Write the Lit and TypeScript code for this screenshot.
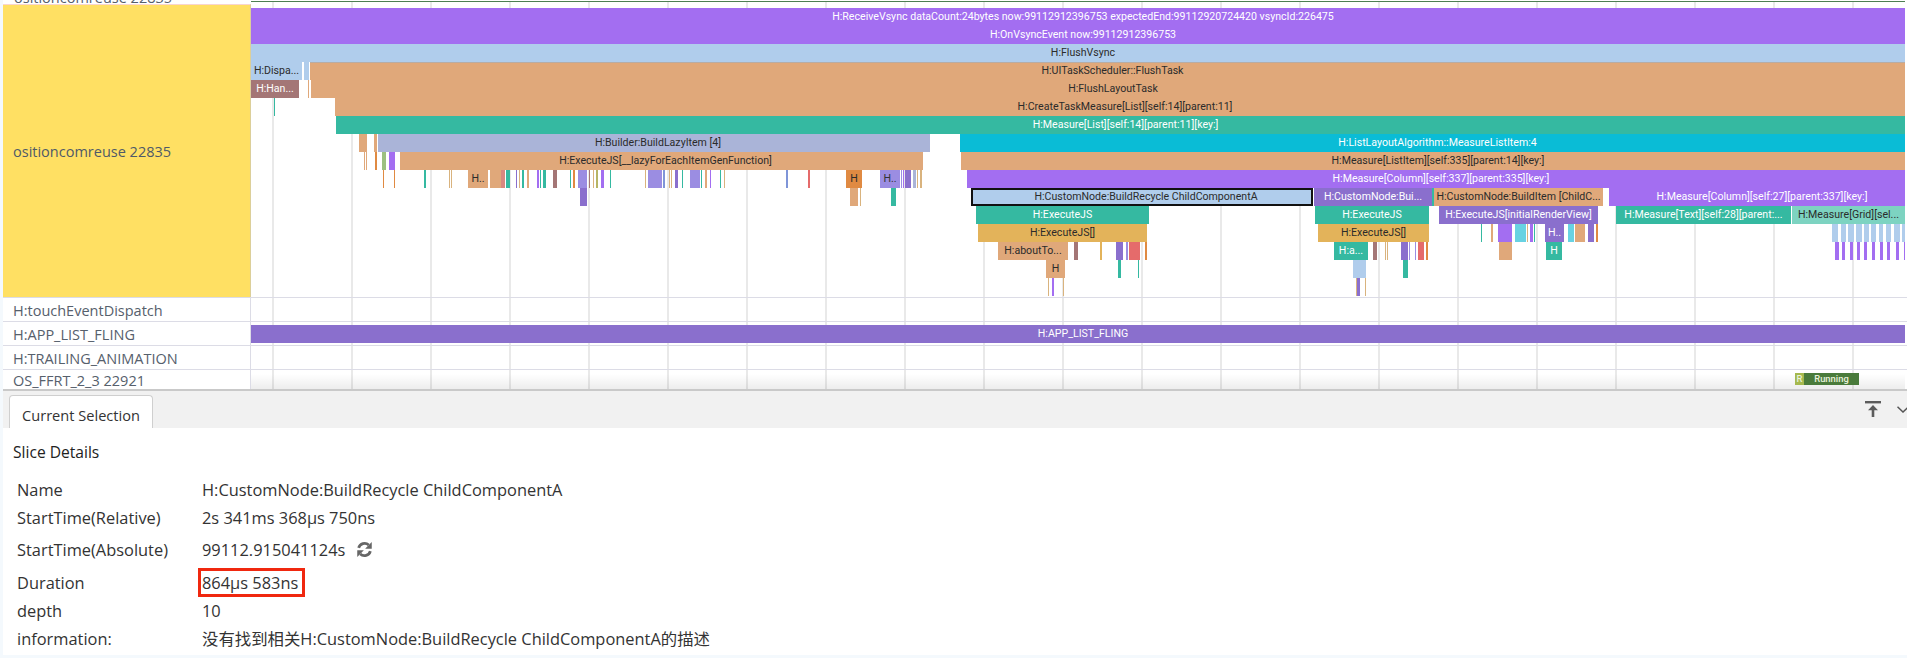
import { LitElement, html, css, svg } from "lit";
import { customElement } from "lit/decorators.js";

type B = [number, number, string, string?];
const END = 1915;
const DEPTHS: B[][] = [
  [[251, END, "pu", "H:ReceiveVsync dataCount:24bytes now:99112912396753 expectedEnd:99112920724420 vsyncId:226475"]],
  [[251, END, "pu", "H:OnVsyncEvent now:99112912396753"]],
  [[251, END, "bl", "H:FlushVsync"]],
  [[251, 302, "bl", "H:Dispa..."], [304, 309, "bl"], [310, END, "or line", "H:UITaskScheduler::FlushTask"]],
  [[251, 299, "br", "H:Han..."], [308, 309, "or"], [311, END, "or", "H:FlushLayoutTask"]],
  [[274, 275, "te"], [335, END, "or", "H:CreateTaskMeasure[List][self:14][parent:11]"]],
  [[336, END, "te", "H:Measure[List][self:14][parent:11][key:]"]],
  [[359, 367, "or"], [374, 377, "or"], [378, 930, "bg nudge", "H:Builder:BuildLazyItem [4]"], [960, END, "cy", "H:ListLayoutAlgorithm::MeasureListItem:4"]],
  [[364, 365, "or"], [366, 367, "or"], [375, 377, "do"], [382, 386, "gr"], [389, 395, "pu"], [400, 923, "or nudge", "H:ExecuteJS[__lazyForEachItemGenFunction]"], [961, END, "or", "H:Measure[ListItem][self:335][parent:14][key:]"]],
  [[383, 384, "do"], [394, 395, "do"], [424, 426, "te"], [449, 450, "ta"], [451, 452, "ta"], [468, 488, "or", "H.."], [490, 501, "or"], [501, 504.5, "pk"], [506, 510, "te"], [516, 517, "dp"], [519, 520, "ta"], [522, 523.5, "te"], [527, 529, "or"], [537, 538.5, "pu"], [540, 541, "te"], [543, 546, "te"], [553, 557, "br"], [570, 571, "te"], [573, 574.5, "do"], [578, 587, "lv"], [589, 590, "br"], [593, 594, "ta"], [596, 598, "ol"], [601, 603.5, "pu"], [610, 611, "te"], [645, 646, "ta"], [648, 662, "lv"], [663, 665, "bu"], [669, 670, "ta"], [671, 672, "ta"], [675, 678, "dp"], [682, 683, "te"], [690, 700, "lv"], [701, 702, "te"], [705, 706.5, "or"], [710, 711, "pu"], [720, 721, "te"], [724, 725, "ta"], [786, 788, "bu"], [808, 809.5, "rd"], [846, 862, "do", "H"], [880, 900, "lv", "H.."], [901, 902, "lv"], [903, 904, "pu"], [905, 911, "dp"], [913, 916, "bg"], [917, 918, "ta"], [920, 922, "ta"], [967, END, "pu", "H:Measure[Column][self:337][parent:335][key:]"]],
  [[580, 587, "dp"], [850, 858, "or"], [860, 861, "ta"], [891, 896, "te"], [971, 1313, "bl sel nudge", "H:CustomNode:BuildRecycle ChildComponentA"], [1314, 1432, "dp", "H:CustomNode:Bui..."], [1432, 1434, "te"], [1434, 1603, "or", "H:CustomNode:BuildItem [ChildC..."], [1609, END, "pu", "H:Measure[Column][self:27][parent:337][key:]"]],
  [[976, 1149, "te", "H:ExecuteJS"], [1315, 1429, "te", "H:ExecuteJS"], [1439, 1598, "dp", "H:ExecuteJS[initialRenderView]"], [1616, 1791, "te", "H:Measure[Text][self:28][parent:..."], [1792, 1905, "lt", "H:Measure[Grid][sel..."]],
  [[978, 1147, "ye", "H:ExecuteJS[]"], [1318, 1429, "ye", "H:ExecuteJS[]"], [1481, 1482, "te"], [1491, 1493, "or"], [1498, 1512, "pu"], [1515, 1526, "lc"], [1527, 1528, "ta"], [1530, 1533, "pu"], [1534, 1535, "te"], [1545, 1564, "dp", "H.."], [1568, 1574, "lc"], [1575, 1585, "or"], [1588, 1594, "dp"], [1596, 1598, "do"],
    [1832, 1838, "bl"], [1841, 1846, "bl"], [1848, 1854, "bl"], [1856, 1862, "bl"], [1864, 1869, "bl"], [1871, 1876, "bl"], [1879, 1883, "bl"], [1886, 1891, "bl"], [1894, 1900, "bl"], [1902, 1905, "bl"]],
  [[998, 1068, "or", "H:aboutTo..."], [1074, 1078, "br"], [1100, 1102, "ye"], [1116, 1123, "dp"], [1126, 1128, "lv"], [1129, 1140, "rd"], [1145, 1147, "do"], [1334, 1368, "te", "H:a..."], [1373, 1377, "br"], [1385, 1386, "ta"], [1387, 1388, "ta"], [1401, 1408, "dp"], [1409, 1410, "lv"], [1415, 1416, "lv"], [1418, 1424, "rd"], [1426, 1428, "do"], [1499, 1512, "or"], [1546, 1562, "te", "H"],
    [1835, 1839, "pu"], [1842, 1845, "pu"], [1850, 1853, "pu"], [1857, 1860, "pu"], [1864, 1867, "pu"], [1872, 1875, "pu"], [1880, 1883, "pu"], [1887, 1890, "pu"], [1896, 1899, "pu"], [1904, 1905, "pu"]],
  [[1046, 1065, "or", "H"], [1118, 1121, "te"], [1138, 1139, "te"], [1353, 1366, "bl"], [1403, 1408, "te"]],
  [[1048, 1049, "ta"], [1052, 1054, "pu"], [1063, 1064, "ta"], [1356, 1357, "ta"], [1357, 1360, "dp"], [1365, 1366, "ta"]],
];

const DETAILS: [string, string][] = [
  ["Name", "H:CustomNode:BuildRecycle ChildComponentA"],
  ["StartTime(Relative)", "2s 341ms 368μs 750ns"],
  ["StartTime(Absolute)", "99112.915041124s"],
  ["Duration", "864μs 583ns"],
  ["depth", "10"],
  ["information:", "没有找到相关H:CustomNode:BuildRecycle ChildComponentA的描述"],
];

@customElement("app-root")
export class AppRoot extends LitElement {
  static styles = css`
    :host {
      display: block;
      width: 1907px;
      height: 658px;
      overflow: hidden;
      background: #f4f9fd;
      font-family: "Open Sans", "Noto Sans CJK SC", sans-serif;
      color: #333;
    }
    .frame { display: flex; flex-direction: column; height: 658px; padding: 0 0 3px 3px; box-sizing: border-box; }
    .trace { height: 389px; flex: none; overflow: hidden; background: #fff; display: flex; flex-direction: column; }
    .row { display: flex; flex: none; border-bottom: 1px solid #dcdce6; box-sizing: border-box; }
    .label {
      width: 248px; flex: none; box-sizing: border-box; padding-left: 10px;
      display: flex; align-items: center; font-size: 14.5px; color: #56606c;
      border-right: 1px solid #dcdce6; white-space: nowrap; overflow: hidden;
    }
    .track {
      flex: 1; position: relative; overflow: hidden; margin-right: 2px;
      background-image: linear-gradient(90deg, #e9e9e9 2px, transparent 2px);
      background-size: 79px 100%;
      background-position: 21px 0;
    }
    .ruler { height: 4px; border: 0; }
    .ruler .label { align-items: flex-end; border-right: 0; background: #fff; padding-left: 11px; }
    .ruler .label span { line-height: 16px; margin-bottom: -2px; }
    .ruler .track { border-top: 1px solid #4d7f52; margin-top: 1px; box-sizing: border-box; }
    .main { height: 294px; border-bottom: 1px solid #dcdce6; }
    .main .label { background: #ffe063; color: #4f5a68; border-right: 1px solid #dccf9a; border-top: 1px solid #f9d5cf; }
    .r24 { height: 24px; }
    .r24 .label { padding-top: 2px; }
    .last { flex: 1; min-height: 0; border-bottom: 0; }
    .last .label { align-items: flex-start; line-height: 21px; }
    .last .track::after {
      content: ""; position: absolute; inset: 4px 0 0 0;
      background: linear-gradient(180deg, transparent, rgba(0, 0, 0, 0.07));
    }
    .flame { padding-top: 4px; }
    .depth { height: 18px; position: relative; }
    .b {
      position: absolute; top: 0; height: 18px; box-sizing: border-box;
      font-family: Roboto, sans-serif;
      font-size: 10.6px; line-height: 18px; text-align: center; white-space: nowrap; overflow: hidden;
      color: #2b2b2b;
    }
    .nudge { padding-left: 8px; }
    .pu { background: #a36ef1; color: #fff; }
    .dp { background: #8a6fcd; color: #fff; }
    .lv { background: #9b8de2; color: #333; }
    .bl { background: #b0cdec; }
    .or { background: #e0a87a; }
    .do { background: #e08a42; }
    .te { background: #35b9a1; color: #fff; }
    .lt { background: #7dd3c1; }
    .cy { background: #0abcd6; color: #fff; }
    .lc { background: #68d2e2; }
    .bg { background: #aab4d8; }
    .bu { background: #7f95d8; }
    .br { background: #a47676; color: #fff; }
    .pk { background: #d98880; }
    .rd { background: #e56b6b; }
    .ye { background: #e3b35a; }
    .ta { background: #d9b37e; }
    .ol { background: #b7b565; }
    .gr { background: #9cc080; }
    .line { box-shadow: inset 0 1px #b8aca4; }
    .sel { border: 2px solid #111; line-height: 14px; }
    .fling {
      position: absolute; left: 0; right: -10px; top: 3px; height: 18px;
      background: #8a6fcd; color: #fff; font-family: Roboto, sans-serif; font-size: 10.6px; line-height: 18px; text-align: center;
    }
    .state {
      position: absolute; left: 1544px; top: 3px; width: 64px; height: 12px; display: flex;
      font-family: Roboto, sans-serif; font-size: 9.4px; font-weight: 500; line-height: 12px; color: #eaf3dc; z-index: 1;
    }
    .state i { width: 9px; background: #a5b94e; font-style: normal; text-align: center; }
    .state b { flex: 1; background: #4a7b3b; text-align: center; font-weight: 500; }

    .panel { flex: 1; background: #fff; display: flex; flex-direction: column; position: relative; }
    .tabs {
      height: 39px; flex: none; box-sizing: border-box; background: #f1f1f1; border-top: 2px solid #c9c9c9;
      display: flex; align-items: flex-end; padding-left: 6px;
    }
    .tab {
      width: 144px; height: 33px; box-sizing: border-box; background: #fff; border: 1px solid #cfcfcf; border-bottom: 0;
      border-radius: 4px 4px 0 0; font-size: 14.6px; color: #333; display: flex; align-items: center; justify-content: center;
      padding-top: 6px;
    }
    .tools { margin-left: auto; align-self: stretch; display: flex; align-items: flex-start; }
    .tools svg { display: block; flex: none; }
    .t1 { margin: 10px 16px 0 0; }
    .t2 { margin: 15px 0 0 0; }
    h2 { margin: 0; height: 47px; display: flex; align-items: center; padding-left: 10px; font-size: 15.6px; font-weight: 400; color: #222; flex: none; }
    .grid {
      display: grid; grid-template-columns: 185px 1fr; grid-template-rows: 28px 28px 37px 28px 28px 28px;
      padding-left: 14px; font-size: 16.4px; color: #333;
    }
    .grid > div { display: flex; align-items: center; gap: 11px; white-space: nowrap; }
    .mark { position: absolute; left: 195px; top: 179px; width: 107px; height: 29px; box-sizing: border-box; border: 3px solid #f0280f; }
  `;

  private block([a, b, cls, text]: B) {
    const style = `left:${a - 251}px;width:${b - a}px`;
    return html`<div class="b ${cls}" style=${style}>${text ?? ""}</div>`;
  }

  private refresh() {
    return html`<svg width="17" height="17" viewBox="0 0 16 16" fill="none" stroke="#666" stroke-width="2.6">
      ${svg`<path d="M2.5 6.5A5.7 5.7 0 0 1 12 3.8"/><path d="M13.5 9.5A5.7 5.7 0 0 1 4 12.2"/>`}
      ${svg`<path d="M14.8 1v6.2H8.6z" fill="#666" stroke="none"/><path d="M1.2 15V8.8h6.2z" fill="#666" stroke="none"/>`}
    </svg>`;
  }

  render() {
    return html`<div class="frame">
      <div class="trace">
        <div class="row ruler">
          <div class="label"><span>ositioncomreuse 22835</span></div>
          <div class="track"></div>
        </div>
        <div class="row main">
          <div class="label"><span>ositioncomreuse 22835</span></div>
          <div class="track flame">
            ${DEPTHS.map((d) => html`<div class="depth">${d.map((b) => this.block(b))}</div>`)}
          </div>
        </div>
        <div class="row r24">
          <div class="label">H:touchEventDispatch</div>
          <div class="track"></div>
        </div>
        <div class="row r24">
          <div class="label">H:APP_LIST_FLING</div>
          <div class="track"><div class="fling">H:APP_LIST_FLING</div></div>
        </div>
        <div class="row r24">
          <div class="label">H:TRAILING_ANIMATION</div>
          <div class="track"></div>
        </div>
        <div class="row last">
          <div class="label">OS_FFRT_2_3 22921</div>
          <div class="track"><div class="state"><i>R</i><b>Running</b></div></div>
        </div>
      </div>
      <div class="panel">
        <div class="tabs">
          <div class="tab">Current Selection</div>
          <div class="tools">
            <svg class="t1" width="16" height="16" viewBox="0 0 16 16" fill="#5c5c5c">
              <rect x="0" y="0" width="16" height="2.4" />
              <path d="M8 4l5 5.2H9.3V16H6.7V9.2H3z" />
            </svg>
            <svg class="t2" width="10" height="7" viewBox="0 0 10 7" fill="none" stroke="#555" stroke-width="1.5">
              <path d="M0.5 0.8L6 6L11.5 0.8" />
            </svg>
          </div>
        </div>
        <h2>Slice Details</h2>
        <div class="grid">
          ${DETAILS.map(
            ([k, v], i) => html`<div>${k}</div><div>${v}${i === 2 ? this.refresh() : ""}</div>`
          )}
        </div>
        <div class="mark"></div>
      </div>
    </div>`;
  }
}
